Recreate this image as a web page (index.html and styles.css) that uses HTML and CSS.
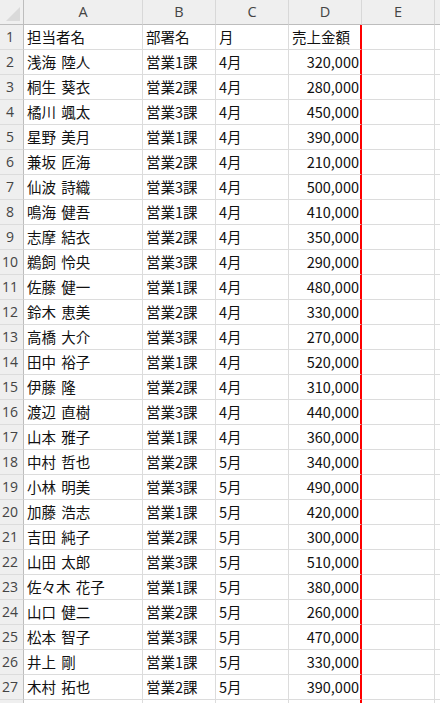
FILE: index.html
```html
<!DOCTYPE html>
<html lang="ja">
<head>
<meta charset="utf-8">
<link rel="stylesheet" href="styles.css">
</head>
<body>
<div class="sheet" id="sheet">
  <div class="corner"><span class="tri"></span></div>
  <div class="ch">A</div><div class="ch">B</div><div class="ch">C</div><div class="ch">D</div><div class="ch">E</div><div class="ch ch-last"></div>
</div>
<script src="app.js"></script>
</body>
</html>
```

FILE: app.js
```js
const rows = [
  ["担当者名","部署名","月","売上金額",true],
  ["浅海 陸人","営業1課","4月","320,000"],
  ["桐生 葵衣","営業2課","4月","280,000"],
  ["橘川 颯太","営業3課","4月","450,000"],
  ["星野 美月","営業1課","4月","390,000"],
  ["兼坂 匠海","営業2課","4月","210,000"],
  ["仙波 詩織","営業3課","4月","500,000"],
  ["鳴海 健吾","営業1課","4月","410,000"],
  ["志摩 結衣","営業2課","4月","350,000"],
  ["鵜飼 怜央","営業3課","4月","290,000"],
  ["佐藤 健一","営業1課","4月","480,000"],
  ["鈴木 恵美","営業2課","4月","330,000"],
  ["高橋 大介","営業3課","4月","270,000"],
  ["田中 裕子","営業1課","4月","520,000"],
  ["伊藤 隆","営業2課","4月","310,000"],
  ["渡辺 直樹","営業3課","4月","440,000"],
  ["山本 雅子","営業1課","4月","360,000"],
  ["中村 哲也","営業2課","5月","340,000"],
  ["小林 明美","営業3課","5月","490,000"],
  ["加藤 浩志","営業1課","5月","420,000"],
  ["吉田 純子","営業2課","5月","300,000"],
  ["山田 太郎","営業3課","5月","510,000"],
  ["佐々木 花子","営業1課","5月","380,000"],
  ["山口 健二","営業2課","5月","260,000"],
  ["松本 智子","営業3課","5月","470,000"],
  ["井上 剛","営業1課","5月","330,000"],
  ["木村 拓也","営業2課","5月","390,000"],
  ["","","",""]
];
const sheet = document.getElementById("sheet");
rows.forEach((r, i) => {
  const add = (cls, txt) => {
    const d = document.createElement("div");
    d.className = cls;
    d.textContent = txt;
    sheet.appendChild(d);
  };
  add("rh", i < 27 ? String(i + 1) : "");
  add("c name", r[0]);
  add("c", r[1]);
  add("c", r[2]);
  add(r[4] ? "c d" : "c d num", r[3]);
  add("c", "");
  add("c c-last", "");
});
```

FILE: styles.css
```css
html, body {
  margin: 0;
  padding: 0;
  background: #ffffff;
  overflow: hidden;
}
.sheet {
  display: grid;
  grid-template-columns: 24px 119px 73px 73px 73px 73px 1fr;
  grid-auto-rows: 25px;
  width: 440px;
  font-family: "Noto Sans CJK JP", "Noto Sans", sans-serif;
  font-size: 14.5px;
  color: #111;
}
.sheet > div {
  box-sizing: border-box;
  height: 25px;
  line-height: 24px;
  white-space: nowrap;
  overflow: hidden;
}
.corner {
  background: #efefef;
  border-right: 1px solid #bdbdbd;
  border-bottom: 1px solid #bdbdbd;
  position: relative;
}
.tri {
  position: absolute;
  right: 3px;
  bottom: 3px;
  width: 0;
  height: 0;
  border-left: 14px solid transparent;
  border-bottom: 14px solid #dadada;
}
.ch {
  background: #efefef;
  border-right: 1px solid #d8d8d8;
  border-bottom: 1px solid #bdbdbd;
  text-align: center;
  font-family: "Open Sans", "Noto Sans", sans-serif;
  font-size: 14.5px;
  color: #444;
}
.ch-last {
  border-right: none;
}
.rh {
  background: #efefef;
  border-right: 1px solid #bdbdbd;
  border-bottom: 1px solid #dcdcdc;
  text-align: center;
  padding-right: 3px;
  font-family: "Open Sans", "Noto Sans", sans-serif;
  font-size: 14px;
  color: #444;
}
.c {
  border-right: 1px solid #dcdcdc;
  border-bottom: 1px solid #dcdcdc;
  padding-left: 3px;
}
.name {
  word-spacing: 2px;
}
.c-last {
  border-right: none;
}
.d {
  border-right: 2px solid #ff0000;
}
.num {
  text-align: right;
  padding-left: 0;
  padding-right: 1px;
}
```
